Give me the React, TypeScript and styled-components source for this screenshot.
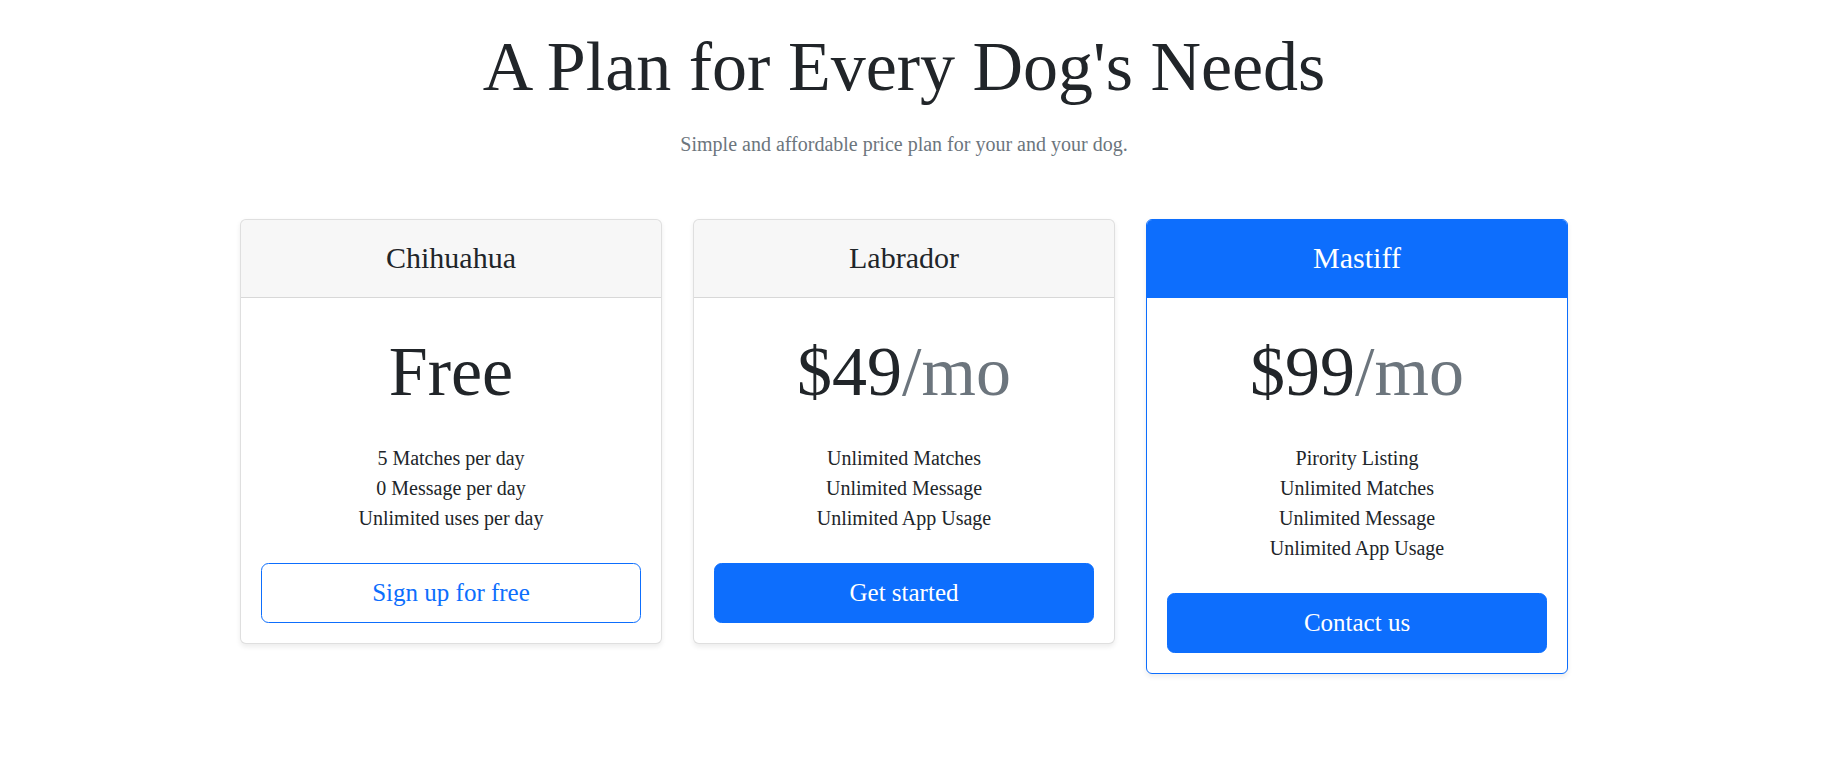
import styled, { createGlobalStyle } from "styled-components";

const GlobalStyle = createGlobalStyle`
  html, body {
    margin: 0;
    padding: 0;
    background: #fff;
  }
  body {
    font-family: "Liberation Serif", "Times New Roman", serif;
    color: #212529;
    font-size: 20px;
    line-height: 1.5;
  }
`;

const Page = styled.main`
  padding: 25px 39px 40px 0;
  display: flex;
  flex-direction: column;
  align-items: center;
`;

const Title = styled.h1`
  margin: 0 0 20px;
  font-size: 70px;
  font-weight: 400;
  line-height: 1.2;
  text-align: center;
`;

const Lead = styled.p`
  margin: 0 0 60px;
  font-size: 20px;
  line-height: 1.5;
  color: #6c757d;
  text-align: center;
`;

const CardGrid = styled.div`
  width: 1328px;
  display: grid;
  grid-template-columns: repeat(3, 1fr);
  gap: 31px;
  align-items: start;
`;

const Card = styled.div<{ $featured?: boolean }>`
  border: 1px solid ${(p) => (p.$featured ? "#0d6efd" : "rgba(0, 0, 0, 0.125)")};
  border-radius: 6px;
  background: #fff;
  box-shadow: 0 2.5px 5px rgba(0, 0, 0, 0.075);
  overflow: hidden;
  text-align: center;
`;

const CardHeader = styled.div<{ $featured?: boolean }>`
  padding: 20px 20px 21px;
  background: ${(p) => (p.$featured ? "#0d6efd" : "rgba(0, 0, 0, 0.03)")};
  color: ${(p) => (p.$featured ? "#fff" : "#212529")};
  border-bottom: 1px solid ${(p) => (p.$featured ? "#0d6efd" : "rgba(0, 0, 0, 0.125)")};
`;

const PlanName = styled.h4`
  margin: 0;
  font-size: 30px;
  font-weight: 400;
  line-height: 1.2;
`;

const CardBody = styled.div`
  padding: 20px;
`;

const Price = styled.h1`
  margin: 12px 0 0;
  font-size: 70px;
  font-weight: 400;
  line-height: 1.2;
`;

const Period = styled.span`
  color: #6c757d;
`;

const Features = styled.ul`
  list-style: none;
  margin: 29px 0 30px;
  padding: 0;
  font-size: 20px;
  line-height: 1.5;
`;

const Button = styled.button<{ $outline?: boolean }>`
  display: block;
  width: 100%;
  padding: 10px 20px;
  font-family: inherit;
  font-size: 25px;
  line-height: 1.5;
  border-radius: 7.5px;
  border: 1px solid #0d6efd;
  background: ${(p) => (p.$outline ? "transparent" : "#0d6efd")};
  color: ${(p) => (p.$outline ? "#0d6efd" : "#fff")};
  cursor: pointer;
`;

type Plan = {
  name: string;
  price: string;
  period?: string;
  features: string[];
  cta: string;
  outline?: boolean;
  featured?: boolean;
};

const plans: Plan[] = [
  {
    name: "Chihuahua",
    price: "Free",
    features: ["5 Matches per day", "0 Message per day", "Unlimited uses per day"],
    cta: "Sign up for free",
    outline: true,
  },
  {
    name: "Labrador",
    price: "$49",
    period: "/mo",
    features: ["Unlimited Matches", "Unlimited Message", "Unlimited App Usage"],
    cta: "Get started",
  },
  {
    name: "Mastiff",
    price: "$99",
    period: "/mo",
    features: ["Pirority Listing", "Unlimited Matches", "Unlimited Message", "Unlimited App Usage"],
    cta: "Contact us",
    featured: true,
  },
];

export default function App() {
  return (
    <>
      <GlobalStyle />
      <Page>
        <Title>A Plan for Every Dog's Needs</Title>
        <Lead>Simple and affordable price plan for your and your dog.</Lead>
        <CardGrid>
          {plans.map((plan) => (
            <Card key={plan.name} $featured={plan.featured}>
              <CardHeader $featured={plan.featured}>
                <PlanName>{plan.name}</PlanName>
              </CardHeader>
              <CardBody>
                <Price>
                  {plan.price}
                  {plan.period && <Period>{plan.period}</Period>}
                </Price>
                <Features>
                  {plan.features.map((f) => (
                    <li key={f}>{f}</li>
                  ))}
                </Features>
                <Button $outline={plan.outline}>{plan.cta}</Button>
              </CardBody>
            </Card>
          ))}
        </CardGrid>
      </Page>
    </>
  );
}
